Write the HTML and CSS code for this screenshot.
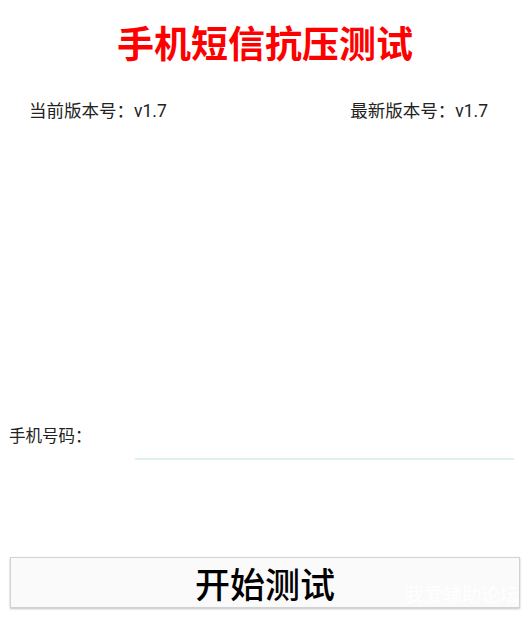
FILE: index.html
```html
<!DOCTYPE html>
<html lang="zh-CN">
<head>
<meta charset="utf-8">
<title>手机短信抗压测试</title>
<link rel="stylesheet" href="styles.css">
</head>
<body>
<div class="screen">
  <h1 class="title">手机短信抗压测试</h1>
  <div class="versions">
    <span class="ver">当前版本号：v1.7</span>
    <span class="ver">最新版本号：v1.7</span>
  </div>
  <div class="phone-row">
    <label class="phone-label">手机号码：</label>
    <div class="phone-input"></div>
  </div>
  <button class="start-btn">开始测试</button>
  <div class="watermark">我爱辅助论坛</div>
</div>
</body>
</html>
```
FILE: styles.css
```css
html, body {
  margin: 0;
  padding: 0;
  background: #ffffff;
}
.screen {
  position: relative;
  width: 525px;
  height: 631px;
  display: flex;
  flex-direction: column;
  font-family: Roboto, "Noto Sans CJK SC", sans-serif;
  color: #222;
  overflow: hidden;
}
.title {
  margin: 24px 0 0 0;
  height: 44px;
  line-height: 44px;
  font-size: 37px;
  font-weight: bold;
  color: #ff0000;
  text-align: center;
  padding-left: 5px;
}
.versions {
  margin-top: 31px;
  display: flex;
  justify-content: space-between;
  padding: 0 37px 0 29px;
  height: 24px;
  line-height: 24px;
}
.ver {
  font-size: 17.5px;
  color: #222;
}
.phone-row {
  margin-top: 291px;
  display: flex;
  height: 46px;
}
.phone-label {
  padding-left: 9px;
  font-size: 16.5px;
  line-height: 46px;
  color: #222;
}
.phone-input {
  margin-left: auto;
  margin-right: 11px;
  width: 379px;
  height: 44px;
  border-bottom: 2px solid #dff0f0;
}
.start-btn {
  margin: 97px 0 0 10px;
  width: 510px;
  height: 51px;
  background: #fafafa;
  border: 1px solid #d2d2d2;
  box-shadow: 0 1px 2px rgba(0, 0, 0, 0.25);
  font-family: "Noto Sans CJK SC", sans-serif;
  font-size: 35px;
  font-weight: 500;
  color: #000;
  line-height: 49px;
  padding: 0;
}
.watermark {
  position: absolute;
  left: 405px;
  top: 582px;
  font-size: 19px;
  line-height: 24px;
  color: #ffffff;
  font-family: "Noto Sans CJK SC", sans-serif;
}
```
